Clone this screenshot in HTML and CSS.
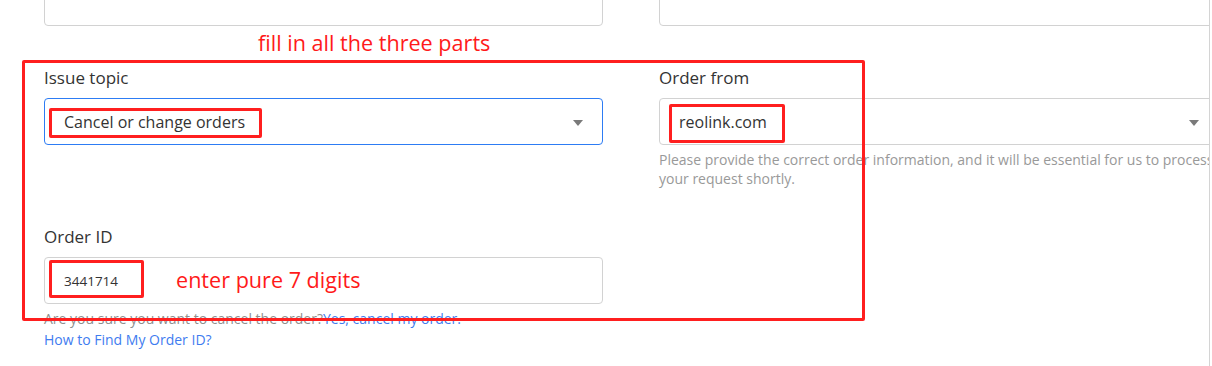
FILE: index.html
```html
<!DOCTYPE html>
<html lang="en">
<head>
<meta charset="utf-8">
<title>Order form</title>
<link rel="stylesheet" href="styles.css">
</head>
<body>
<div class="frame">
  <div class="top-row">
    <div class="control"></div>
    <div class="control"></div>
  </div>
  <div class="form-grid">
    <div class="field">
      <label class="label">Issue topic</label>
      <div class="control select focused">
        <span class="value">Cancel or change orders</span>
        <span class="caret"></span>
        <span class="mark mark-topic"></span>
      </div>
    </div>
    <div class="field">
      <label class="label">Order from</label>
      <div class="control select">
        <span class="value">reolink.com</span>
        <span class="caret caret-right"></span>
        <span class="mark mark-from"></span>
      </div>
      <p class="help">Please provide the correct order information, and it will be essential for us to process your request shortly.</p>
    </div>
    <div class="field">
      <label class="label">Order ID</label>
      <div class="control input">
        <span class="value small">3441714</span>
        <span class="mark mark-id"></span>
        <span class="note note-digits">enter pure 7 digits</span>
      </div>
      <p class="hint">Are you sure you want to cancel the order?<a class="link" href="#">Yes, cancel my order.</a></p>
      <p class="hint"><a class="link" href="#">How to Find My Order ID?</a></p>
    </div>
    <div class="field"></div>
  </div>
</div>
<span class="note note-parts">fill in all the three parts</span>
<div class="outline"></div>
</body>
</html>
```
FILE: styles.css
```css
html, body {
  margin: 0;
  padding: 0;
  background: #fff;
}
body {
  width: 1212px;
  height: 366px;
  overflow: hidden;
  position: relative;
  font-family: "Open Sans", "Noto Sans", sans-serif;
  color: #333;
}
.frame {
  width: 1210px;
  height: 366px;
  box-sizing: border-box;
  border-right: 1px solid #d4d4d4;
  overflow: hidden;
  padding-left: 44px;
}
.top-row {
  height: 26px;
  overflow: hidden;
  display: grid;
  grid-template-columns: 559px 559px;
  column-gap: 56px;
  margin-bottom: 40px;
}
.top-row .control {
  margin-top: -21px;
}
.form-grid {
  display: grid;
  grid-template-columns: 559px 559px;
  grid-template-rows: 159px auto;
  column-gap: 56px;
}
.label {
  display: block;
  font-size: 17px;
  line-height: 24px;
  margin-bottom: 8px;
  color: #333;
}
.control {
  position: relative;
  box-sizing: border-box;
  height: 47px;
  border: 1px solid #d2d2d2;
  border-radius: 4px;
  display: flex;
  align-items: center;
  padding-left: 19px;
  background: #fff;
}
.control.focused {
  border-color: #2d7cf4;
}
.value {
  font-size: 16px;
  color: #333;
}
.value.small {
  font-size: 13.5px;
}
.caret {
  position: absolute;
  right: 19px;
  top: 21px;
  width: 0;
  height: 0;
  border-left: 5.5px solid transparent;
  border-right: 5.5px solid transparent;
  border-top: 6px solid #7a7a7a;
}
.caret-right {
  right: auto;
  left: 529px;
}
.mark {
  position: absolute;
  box-sizing: border-box;
  border: 3px solid #ff1f1f;
  border-radius: 2px;
}
.mark-topic { left: 4px; top: 9px; width: 213px; height: 30px; }
.mark-from { left: 9px; top: 5px; width: 116px; height: 39px; }
.mark-id { left: 4px; top: 2px; width: 95px; height: 38px; }
.note {
  position: absolute;
  color: #ff1a1a;
  font-family: "Open Sans", "Noto Sans", sans-serif;
  font-size: 21.6px;
  line-height: 28px;
  white-space: nowrap;
}
.note-digits {
  left: 131px;
  top: 8px;
}
.note-parts {
  left: 258px;
  top: 29px;
}
.help {
  margin: 5px 0 0;
  font-size: 14px;
  line-height: 19px;
  color: #999;
  width: 575px;
}
.hint {
  margin: 4px 0 0;
  font-size: 14px;
  line-height: 21px;
  color: #8f8f8f;
}
.hint + .hint {
  margin-top: 0;
}
.link {
  color: #3f7cf0;
  text-decoration: none;
}
.outline {
  position: absolute;
  left: 22px;
  top: 60px;
  width: 843px;
  height: 261px;
  box-sizing: border-box;
  border: 3px solid #ff1f1f;
  border-radius: 2px;
  pointer-events: none;
}
```
